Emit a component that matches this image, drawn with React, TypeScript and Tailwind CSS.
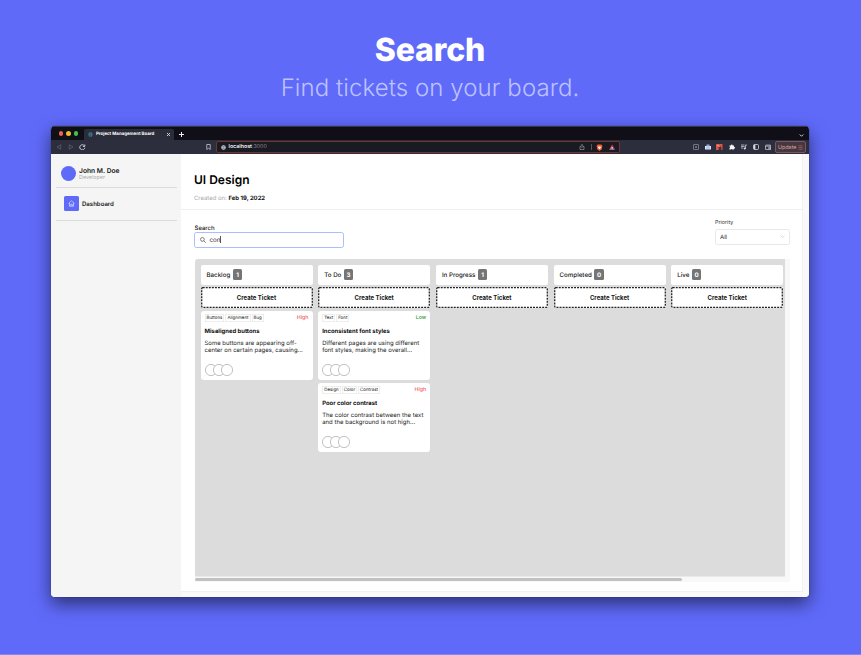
import React from 'react';

type Ticket = {
  tags: string[];
  priority: 'High' | 'Low';
  title: string;
  lines: string[];
};

type Column = { name: string; count: number; tickets: Ticket[] };

const columns: Column[] = [
  {
    name: 'Backlog',
    count: 1,
    tickets: [
      {
        tags: ['Buttons', 'Alignment', 'Bug'],
        priority: 'High',
        title: 'Misaligned buttons',
        lines: ['Some buttons are appearing off-', 'center on certain pages, causing...'],
      },
    ],
  },
  {
    name: 'To Do',
    count: 3,
    tickets: [
      {
        tags: ['Text', 'Font'],
        priority: 'Low',
        title: 'Inconsistent font styles',
        lines: ['Different pages are using different', 'font styles, making the overall...'],
      },
      {
        tags: ['Design', 'Color', 'Contrast'],
        priority: 'High',
        title: 'Poor color contrast',
        lines: ['The color contrast between the text', 'and the background is not high...'],
      },
    ],
  },
  { name: 'In Progress', count: 1, tickets: [] },
  { name: 'Completed', count: 0, tickets: [] },
  { name: 'Live', count: 0, tickets: [] },
];

function TitleBar() {
  return (
    <div className="flex h-[14px] shrink-0 items-end bg-[#100e17] shadow-[inset_0_1px_0_#34344a]">
      <div className="flex h-full w-[33px] items-center gap-[3px] pl-[7.5px] pt-px">
        <span className="size-[4.6px] rounded-full bg-[#f0614f]" />
        <span className="size-[4.6px] rounded-full bg-[#efb732]" />
        <span className="size-[4.6px] rounded-full bg-[#3ec544]" />
      </div>
      <div className="flex h-[11.5px] w-[89.5px] items-center rounded-t-[2px] bg-[#2c2d3b] pl-[4px] pr-[3px]">
        <svg className="size-[5px]" viewBox="0 0 10 10" fill="#2f4b5c" stroke="#4b91a2" strokeWidth="1">
          <ellipse cx="5" cy="5" rx="4.5" ry="1.8" />
          <ellipse cx="5" cy="5" rx="4.5" ry="1.8" transform="rotate(60 5 5)" />
          <ellipse cx="5" cy="5" rx="4.5" ry="1.8" transform="rotate(120 5 5)" />
        </svg>
        <span className="ml-[3px] flex-1 whitespace-nowrap pt-[2.600px] text-[4.400px] font-bold text-white">Project Management Board</span>
        <svg className="size-[5px]" viewBox="0 0 10 10" stroke="#d8d8df" strokeWidth="1.8">
          <path d="M2 2l6 6M8 2l-6 6" />
        </svg>
      </div>
      <svg className="mb-[3px] ml-[5.500px] size-[5px]" viewBox="0 0 10 10" stroke="#f2f2f5" strokeWidth="2">
        <path d="M5 0v10M0 5h10" />
      </svg>
      <svg className="mb-[2.500px] ml-auto mr-[5px] size-[5px]" viewBox="0 0 10 10" fill="none" stroke="#cfcfd8" strokeWidth="2">
        <path d="M1.5 3L5 6.5 8.500 3" />
      </svg>
    </div>
  );
}

function ToolBar() {
  return (
    <div className="flex h-[14px] shrink-0 items-center bg-[#2d2e3d]">
      <svg className="ml-[5px] size-[6px]" viewBox="0 0 12 12" fill="none" stroke="#656675" strokeWidth="1.3">
        <path d="M9.500 1.500v9L2 6z" />
      </svg>
      <svg className="ml-[6px] size-[6px]" viewBox="0 0 12 12" fill="none" stroke="#656675" strokeWidth="1.3">
        <path d="M2.500 1.500v9L10 6z" />
      </svg>
      <svg className="ml-[5px] size-[6.500px]" viewBox="0 0 12 12" fill="none" stroke="#dedee5" strokeWidth="1.6">
        <path d="M10 3.500A4.700 4.700 0 1 0 10.700 7" />
        <path d="M10.700 1v3.500H7.200" />
      </svg>
      <svg className="ml-[120px] h-[6px] w-[5px]" viewBox="0 0 10 12" fill="none" stroke="#b9bac6" strokeWidth="1.7">
        <path d="M1.500 1h7v10L5 8.500 1.500 11z" />
      </svg>
      <div className="ml-[5px] flex h-[12px] w-[404px] items-center rounded-[2px] border border-[#71342f] bg-[#1a1a22] pl-[4px] pr-[3.500px]">
        <svg className="size-[5px]" viewBox="0 0 12 12" fill="#73747e" stroke="#c5c5cc" strokeWidth="1.400">
          <circle cx="6" cy="6" r="5" />
          <path d="M1 6h10M6 1c-3 3-3 7 0 10 3-3 3-7 0-10" fill="none" />
        </svg>
        <span className="ml-[3px] pt-[2.600px] text-[5.300px] font-semibold text-[#f2f2f4]">
          localhost<span className="font-normal text-[#858590]">:3000</span>
        </span>
        <svg className="ml-auto size-[6px]" viewBox="0 0 12 12" fill="none" stroke="#a7a7ae" strokeWidth="1.2">
          <path d="M4 5H2v6h8V5H8M6 8V1M4 3l2-2 2 2" />
        </svg>
        <span className="ml-[6px] h-[6px] w-px bg-[#565660]" />
        <svg className="ml-[4px] size-[7px]" viewBox="0 0 12 12">
          <path d="M3 1h6l2 2-1 6-4 3-4-3-1-6z" fill="#f05b32" />
          <path d="M3 4l2 1 1-1 1 1 2-1-1 3-2 2-2-2z" fill="#fff" />
        </svg>
        <svg className="ml-[5.500px] size-[6.500px]" viewBox="0 0 12 12">
          <path d="M6 1l6 10-6-3z" fill="#ac3170" />
          <path d="M0 11l6-3 6 3z" fill="#766ac9" />
          <path d="M6 1L0 11l6-3z" fill="#ee533b" />
          <path d="M6 5L4 8.500h4z" fill="#fff" />
        </svg>
      </div>
      <div className="ml-auto mr-[4px] flex items-center gap-[5.900px]">
        <svg className="size-[6px]" viewBox="0 0 12 12" fill="none" stroke="#989aa5" strokeWidth="1.300">
          <rect x="1" y="1" width="10" height="10" rx="1" />
          <circle cx="6" cy="6" r="1" fill="#c6c7ce" />
        </svg>
        <svg className="size-[6px]" viewBox="0 0 12 12">
          <path d="M0 4h12v7H0z" fill="#dce9fa" />
          <path d="M3 1h6v4H3z" fill="#8fa9d3" />
          <path d="M3 7h2v2H3zM7 7h2v2H7z" fill="#5275b4" />
        </svg>
        <svg className="size-[6.500px]" viewBox="0 0 12 12">
          <rect width="12" height="12" rx="1" fill="#dc5347" />
          <path d="M5 4h3l2 3v4H5z" fill="#472f35" />
          <path d="M2 2l5 3" stroke="#fff" />
        </svg>
        <svg className="size-[6px]" viewBox="0 0 12 12" fill="#f4f4f6">
          <path d="M1 3h3a1.600 1.600 0 1 1 3 0h3v3a1.600 1.600 0 1 1 0 3v2H7a1.600 1.600 0 0 0-3 0H1V8a1.600 1.600 0 0 0 0-3z" />
        </svg>
        <svg className="size-[6px]" viewBox="0 0 12 12" fill="none" stroke="#d9d9df" strokeWidth="1.400">
          <path d="M0 2h7M0 5h7M0 8h4M9 9V2h3" />
          <circle cx="7.500" cy="9" r="1.500" fill="#d9d9df" />
        </svg>
        <svg className="size-[6px]" viewBox="0 0 12 12" fill="none" stroke="#d9d9df" strokeWidth="1.500">
          <rect x="1" y="1" width="10" height="10" rx="2" />
          <path d="M2 2h2v8H2z" fill="#d9d9df" />
        </svg>
        <svg className="size-[6.500px]" viewBox="0 0 12 12" fill="none" stroke="#c9cad2" strokeWidth="1.400">
          <path d="M10 4V2H2a1 1 0 0 0-1 1v7h10V4H1M7 6h4v3H7z" />
        </svg>
      </div>
      <div className="mr-[3px] flex h-[12px] w-[31px] items-center justify-between rounded-[2px] border border-[#78575f] bg-[#443742] px-[2px] text-[5.400px] text-[#dfa49b]">
        <span className="pt-[1.400px]">Update</span>
        <svg className="size-[5px]" viewBox="0 0 10 10" stroke="#a76262" strokeWidth="1.500">
          <path d="M1 1.500h8M1 5h8M1 8.500h8" />
        </svg>
      </div>
    </div>
  );
}

function Sidebar() {
  return (
    <aside className="w-[130px] shrink-0 bg-[#f5f5f5] px-[4.500px]">
      <div className="flex h-[33.500px] items-center border-b border-[#dddddd] pl-[5.500px] pt-[6px]">
        <span className="size-[15px] rounded-full bg-[#5f6af9]" />
        <div className="ml-[3px] pt-[2px]">
          <div className="h-[7.500px] text-[6.700px] font-semibold leading-[7.500px] text-[#161616]">John M. Doe</div>
          <div className="h-[6px] text-[5.400px] leading-[6px] text-[#aaaaaa]">Developer</div>
        </div>
      </div>
      <div className="flex h-[33px] items-center border-b border-[#dddddd] pl-[8.500px]">
        <span className="flex size-[15px] items-center justify-center rounded-[1.500px] bg-[#5f6af9]">
          <svg className="size-[7px]" viewBox="0 0 14 14" fill="none" stroke="#eceeff" strokeWidth="1.200" strokeLinejoin="round">
            <path d="M1 7l6-5.500L13 7M3 6v6.500h8V6M5.500 12V8.500h3V12" />
          </svg>
        </span>
        <span className="ml-[3px] pt-[2.200px] text-[6.050px] font-semibold text-[#202020]">Dashboard</span>
      </div>
    </aside>
  );
}

function TicketCard({ ticket }: { ticket: Ticket }) {
  return (
    <div className="h-[68.500px] rounded-[3px] bg-white px-[4px] pt-[3px]">
      <div className="flex h-[8px] items-center gap-px">
        {ticket.tags.map((tag) => (
          <span
            key={tag}
            className="flex h-[8px] items-center rounded-[1px] px-[2px] pt-[2.600px] text-[4.450px] text-[#202020] shadow-[inset_0_0_0_0.5px_#dddddd]"
          >
            {tag}
          </span>
        ))}
        <span
          className={`ml-auto pt-[2px] text-[5.300px] font-medium ${ticket.priority === 'High' ? 'text-[#f4605f]' : 'text-[#2f9a2f]'}`}
        >
          {ticket.priority}
        </span>
      </div>
      <div className="mt-[5.700px] h-[8px] whitespace-nowrap text-[5.900px] font-bold leading-[8px] text-[#111111]">{ticket.title}</div>
      <div className="mt-[4px] whitespace-nowrap text-[5.950px] leading-[7.500px] tracking-[0.030px] text-[#1c1c1c]">
        {ticket.lines.map((line) => (
          <div key={line}>{line}</div>
        ))}
      </div>
      <div className="mt-[9.500px] flex -space-x-[4px]">
        {[0, 1, 2].map((n) => (
          <svg key={n} className="size-[12px]" viewBox="0 0 12 12">
            <circle cx="6" cy="6" r="5.600" fill="#fff" stroke="#999999" strokeWidth="0.600" />
          </svg>
        ))}
      </div>
    </div>
  );
}

function CreateTicket() {
  return (
    <button className="relative mt-[2px] flex h-[21px] w-full items-center justify-center bg-white text-[6px] font-bold text-[#161616]">
      <svg className="absolute inset-0 size-full" fill="none" stroke="#222222" strokeWidth="1.300" strokeDasharray="2 1.050">
        <rect x="0.700" y="0.700" width="110.600" height="19.600" rx="1" />
      </svg>
      Create Ticket
    </button>
  );
}

function Board() {
  return (
    <div className="mt-[11px] flex h-[323px] w-[595.500px] flex-col rounded-tl-[3px] bg-[#f8f8f8]">
      <div className="flex h-[318px] w-[590.500px] gap-[5.700px] rounded-tl-[3px] border-b border-[#e9e9e9] bg-[#dcdcdc] pl-[6px] pt-[6px]">
        {columns.map((column) => (
          <section key={column.name} className="w-[112px] shrink-0">
            <header className="flex h-[20px] items-center rounded-[2px] bg-white pl-[6px] text-[6.200px] font-medium text-[#202020]">
              <span className="pt-[1.400px]">{column.name}</span>
              <span className="mb-[1px] ml-[2.500px] flex h-[11px] w-[9.500px] items-center justify-center rounded-[1.500px] bg-[#757575] pt-[1.400px] text-[6.200px] font-bold text-white">
                {column.count}
              </span>
            </header>
            <CreateTicket />
            <div className="mt-[3px] flex flex-col gap-[3.500px]">
              {column.tickets.map((ticket) => (
                <TicketCard key={ticket.title} ticket={ticket} />
              ))}
            </div>
          </section>
        ))}
      </div>
      <div className="flex h-[5px] items-center pl-[0.500px]">
        <div className="h-[3px] w-[487px] rounded-full bg-[#c1c1c1]" />
      </div>
    </div>
  );
}

function MainPanel() {
  return (
    <main className="flex flex-1 flex-col bg-[#f9f9f9] pb-[5.500px] pr-[6px]">
      <div className="flex-1 border-b border-r border-[#f1f1f1] bg-white">
        <div className="h-[55.500px] border-b-[1.500px] border-[#efefef] pl-[13px] pt-[18px]">
          <h2 className="h-[16px] text-[12px] font-semibold leading-[16px] text-black">UI Design</h2>
          <p className="mt-[6.800px] h-[8px] text-[5.950px] leading-[8px] text-[#aaaaaa]">
            Created on: <b className="font-bold text-[#151515]">Feb 19, 2022</b>
          </p>
        </div>
        <div className="pl-[13.500px] pr-[12px]">
          <div className="flex h-[38.500px] items-start justify-between">
            <div className="pt-[15.200px]">
              <label className="block h-[8px] text-[6px] font-medium leading-[8px] text-[#202020]">Search</label>
              <div className="-ml-[0.500px] -mt-[1.200px] flex h-[16px] w-[150px] items-center rounded-[2.500px] border border-[#a9bdff] bg-white pl-[4.500px]">
                <svg className="size-[6px]" viewBox="0 0 12 12" fill="none" stroke="#333333" strokeWidth="1.200">
                  <circle cx="4.800" cy="4.800" r="3.800" />
                  <path d="M7.700 7.700l3.800 3.800" />
                </svg>
                <span className="ml-[4px] pt-[1.400px] text-[6.200px] text-[#242424]">con</span>
                <span className="h-[7px] w-[0.500px] bg-[#555555]" />
              </div>
            </div>
            <div className="pt-[9.200px]">
              <label className="block h-[8px] text-[5.350px] leading-[8px] text-[#303030]">Priority</label>
              <div className="mt-[2.200px] flex h-[16px] w-[75px] items-center justify-between rounded-[2.500px] border border-[#e8e8e8] px-[4px] text-[6px] text-[#202020]">
                <span className="pt-[1px]">All</span>
                <svg className="size-[5px]" viewBox="0 0 10 10" fill="none" stroke="#c6c6c6" strokeWidth="1.300">
                  <path d="M1 3l4 4 4-4" />
                </svg>
              </div>
            </div>
          </div>
          <Board />
        </div>
      </div>
    </main>
  );
}

export default function App() {
  return (
    <div className="flex h-[655px] w-[861px] flex-col items-center overflow-hidden border-b border-[#7d86fa] bg-[#5f6af9] pr-px font-['Inter',sans-serif] [text-rendering:geometricPrecision]">
      <h1 className="mt-[30px] h-[40px] text-[32px] font-extrabold leading-[40px] tracking-[-0.150px] text-white">Search</h1>
      <p className="mt-[2px] h-[32px] whitespace-nowrap text-[24px] font-light leading-[32px] tracking-[0.080px] text-[#bcc1ff]">
        Find tickets on your board.
      </p>
      <div className="mt-[22px] flex h-[471px] w-[758px] shrink-0 flex-col overflow-hidden rounded-[4px] bg-white shadow-[0_0_1px_#191a30,0_7px_18px_rgba(0,0,0,0.55)]">
        <TitleBar />
        <ToolBar />
        <div className="flex min-h-0 flex-1">
          <Sidebar />
          <MainPanel />
        </div>
      </div>
    </div>
  );
}
